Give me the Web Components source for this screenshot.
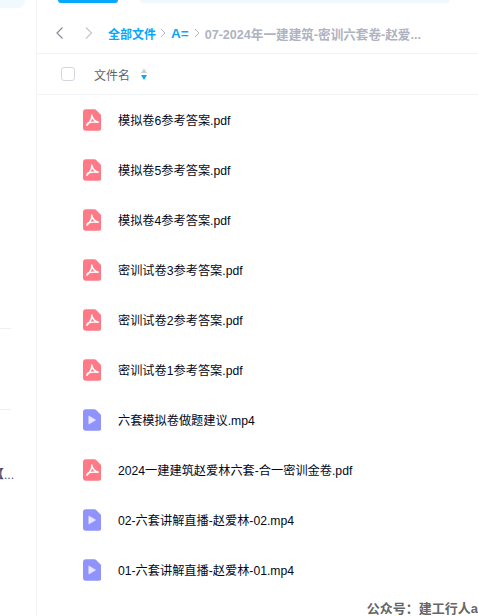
<!DOCTYPE html>
<html lang="zh">
<head>
<meta charset="utf-8">
<title>文件列表</title>
<style>
  html, body { margin: 0; height: 100%; background: #fff; overflow: hidden; }
  body { font-family: "Liberation Sans", "Noto Sans CJK SC", sans-serif; }
</style>
</head>
<body>
<template id="side-tpl">
  <style>
    :host { display: flex; flex-direction: column; width: 37px; height: 616px; box-sizing: border-box; border-right: 1px solid #f1f2f4; flex: none; overflow: hidden; }
    .pill { width: 25px; height: 8px; background: #eff9fe; border-radius: 0 0 8px 0; flex: none; }
    .line { width: 11px; height: 1px; background: #f0f0f0; flex: none; }
    .l1 { margin-top: 320px; }
    .l2 { margin-top: 80px; }
    .more { margin-top: 56px; height: 18px; line-height: 18px; font-size: 12px; color: #42526e; white-space: nowrap; margin-left: -8px; }
  </style>
  <div class="pill"></div>
  <div class="line l1"></div>
  <div class="line l2"></div>
  <div class="more">【...</div>
</template>

<template id="top-tpl">
  <style>
    :host { display: flex; height: 3px; flex: none; overflow: hidden; }
    .blue { width: 60px; margin-left: 21px; height: 3px; background: #06a7ff; border-radius: 0 0 12px 12px; }
    .light { width: 310px; margin-left: 22px; height: 3px; background: #eff9fe; border-radius: 0 0 10px 10px; }
  </style>
  <div class="blue"></div><div class="light"></div>
</template>

<template id="crumb-tpl">
  <style>
    :host { display: flex; align-items: center; height: 51px; box-sizing: border-box; border-bottom: 1px solid #f1f2f4; flex: none; padding: 10px 0 0 19px; font-size: 12px; font-weight: 700; white-space: nowrap; }
    svg { display: block; flex: none; }
    .link { color: #06a7ff; }
    .big { font-size: 13.5px; }
    .cur { color: #afb3bf; font-size: 12.6px; }
    .sep { margin: 0 5px 0 4px; }
    .sep2 { margin: 0 5px; }
  </style>
  <svg style="margin-right:22px" width="7" height="12" viewBox="0 0 7 12"><path d="M6.500 .5 1 6l5.500 5.500" fill="none" stroke="#878c9c" stroke-width="1.200"/></svg>
  <svg style="margin-right:15px" width="8" height="12" viewBox="0 0 8 12"><path d="M1 .5 6.500 6 1 11.500" fill="none" stroke="#c4c7cf" stroke-width="1.200"/></svg>
  <span class="link">全部文件</span>
  <svg class="sep" width="6" height="10" viewBox="0 0 6 10"><path d="M1 1l4 4-4 4" fill="none" stroke="#b5b8c2" stroke-width="1"/></svg>
  <span class="link big">A=</span>
  <svg class="sep2" width="6" height="10" viewBox="0 0 6 10"><path d="M1 1l4 4-4 4" fill="none" stroke="#b5b8c2" stroke-width="1"/></svg>
  <span class="cur">07-2024年一建建筑-密训六套卷-赵爱...</span>
</template>

<template id="head-tpl">
  <style>
    :host { display: flex; align-items: center; height: 41px; box-sizing: border-box; border-bottom: 1px solid #f1f2f4; flex: none; padding-left: 24px; font-size: 12px; color: #5f6368; }
    .box { width: 12px; height: 12px; border: 1px solid #d4d7de; border-radius: 3px; margin-right: 19px; flex: none; }
    svg { display: block; margin-left: 11px; }
  </style>
  <div class="box"></div>
  <span>文件名</span>
  <svg width="6" height="12" viewBox="0 0 6 12"><path d="M3 .5 6 5H0z" fill="#c9cdd6"/><path d="M3 12 0 7h6z" fill="#06a7ff"/></svg>
</template>

<template id="row-tpl">
  <style>
    :host { display: flex; align-items: center; height: 50px; flex: none; padding-left: 46px; font-size: 12.2px; color: #03081a; white-space: nowrap; }
    svg { display: block; flex: none; margin-right: 17px; }
  </style>
  <span id="icon"></span>
  <slot></slot>
</template>

<template id="list-tpl">
  <style>
    :host { display: flex; flex-direction: column; }
  </style>
  <slot></slot>
</template>

<template id="mark-tpl">
  <style>
    :host { position: absolute; right: 0; bottom: -2px; height: 18px; line-height: 18px; font-size: 13px; font-weight: 700; color: #666; white-space: nowrap; }
  </style>
  <slot></slot>
</template>

<template id="app-tpl">
  <style>
    :host { display: flex; width: 478px; height: 616px; overflow: hidden; position: relative; }
    main { display: flex; flex-direction: column; flex: 1; min-width: 0; }
  </style>
  <slot name="side"></slot>
  <main><slot></slot></main>
</template>

<pan-app>
  <pan-side slot="side"></pan-side>
  <pan-top></pan-top>
  <pan-crumb></pan-crumb>
  <pan-head></pan-head>
  <pan-list>
    <pan-row type="pdf">模拟卷6参考答案.pdf</pan-row>
    <pan-row type="pdf">模拟卷5参考答案.pdf</pan-row>
    <pan-row type="pdf">模拟卷4参考答案.pdf</pan-row>
    <pan-row type="pdf">密训试卷3参考答案.pdf</pan-row>
    <pan-row type="pdf">密训试卷2参考答案.pdf</pan-row>
    <pan-row type="pdf">密训试卷1参考答案.pdf</pan-row>
    <pan-row type="mp4">六套模拟卷做题建议.mp4</pan-row>
    <pan-row type="pdf">2024一建建筑赵爱林六套-合一密训金卷.pdf</pan-row>
    <pan-row type="mp4">02-六套讲解直播-赵爱林-02.mp4</pan-row>
    <pan-row type="mp4">01-六套讲解直播-赵爱林-01.mp4</pan-row>
  </pan-list>
  <pan-mark>公众号：建工行人a</pan-mark>
</pan-app>

<script>
  // same rounded page shape for both file types
  const PAGE = 'M3 0h8.800q1 0 1.700.7l4.800 4.800q.7.7.7 1.700V19a3 3 0 0 1-3 3H3a3 3 0 0 1-3-3V3a3 3 0 0 1 3-3z';
  const ICONS = {
    pdf: `<svg width="18" height="22" viewBox="0 0 18.500 22"><path d="${PAGE}" fill="#ff7a86"/><path d="M9 6c.5 3 2.300 6 6.500 7.200M9 6c.3 3.500-1.500 7-5 10.300M4.500 14.500c3-1.300 7-1.800 11-1.300" fill="none" stroke="#fff" stroke-width="1.600" stroke-linecap="round"/></svg>`,
    mp4: `<svg width="18" height="22" viewBox="0 0 18.500 22"><path d="${PAGE}" fill="#8f93fb"/><path d="M6 6.800v8.400l7-4.200z" fill="#e6e7ff" stroke="#e6e7ff" stroke-width=".6" stroke-linejoin="round"/></svg>`,
  };

  class TplElement extends HTMLElement {
    constructor() {
      super();
      const tpl = document.getElementById(this.constructor.tpl);
      this.attachShadow({ mode: 'open' }).appendChild(tpl.content.cloneNode(true));
    }
  }

  class PanRow extends TplElement {
    static tpl = 'row-tpl';
    connectedCallback() {
      const type = this.getAttribute('type') || 'pdf';
      this.shadowRoot.getElementById('icon').innerHTML = ICONS[type];
    }
  }

  const simple = { 'pan-app': 'app-tpl', 'pan-side': 'side-tpl', 'pan-top': 'top-tpl', 'pan-crumb': 'crumb-tpl', 'pan-head': 'head-tpl', 'pan-list': 'list-tpl', 'pan-mark': 'mark-tpl' };
  for (const [name, id] of Object.entries(simple)) {
    customElements.define(name, class extends TplElement { static tpl = id; });
  }
  customElements.define('pan-row', PanRow);
</script>
</body>
</html>
